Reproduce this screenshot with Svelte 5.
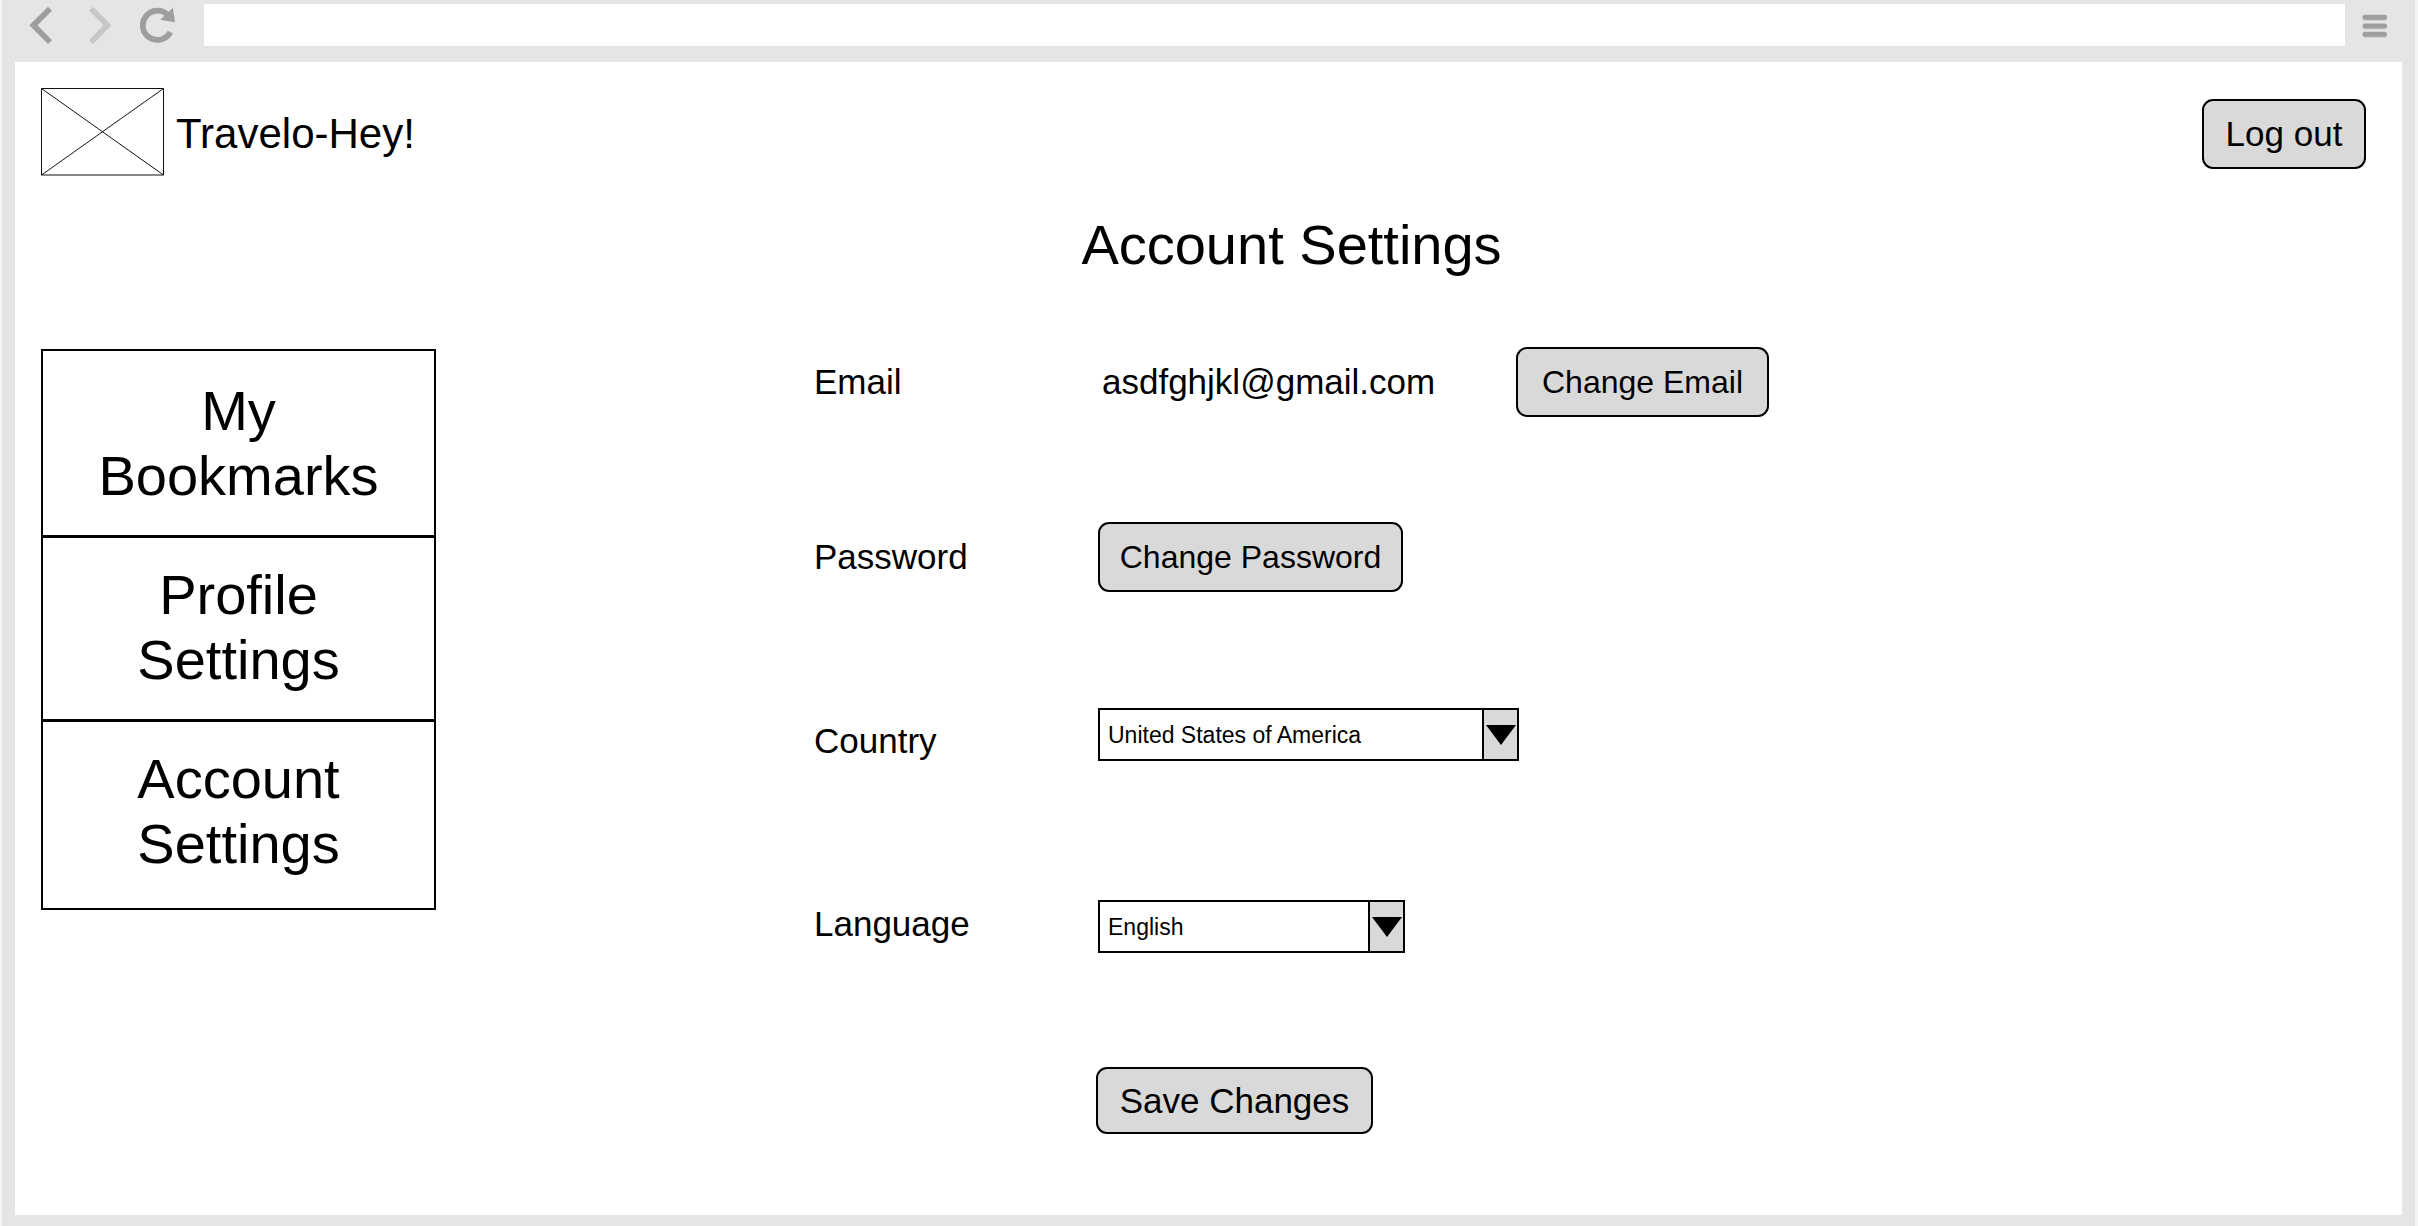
<script>
  let country = $state('United States of America');
  let language = $state('English');
  let address = $state('');

  const countries = ['United States of America', 'Canada', 'Indonesia', 'United Kingdom'];
  const languages = ['English', 'French', 'Indonesian', 'Spanish'];
  const links = [
    ['My', 'Bookmarks'],
    ['Profile', 'Settings'],
    ['Account', 'Settings']
  ];
</script>

{#snippet dropArrow()}
  <span class="arrow" aria-hidden="true">
    <svg width="30" height="20" viewBox="0 0 30 20"><path d="M0 0H30L15 20Z" /></svg>
  </span>
{/snippet}

<div class="browser">
  <div class="toolbar">
    <div class="history">
      <button type="button" class="icon" aria-label="Back">
        <svg width="24" height="38" viewBox="0 0 24 38" fill="#9e9e9e">
          <path d="M0.3 19.3L19 0.8L23 4.8L8.5 19.3L23 34.3L19 38Z" />
        </svg>
      </button>
      <button type="button" class="icon" aria-label="Forward">
        <svg width="24" height="38" viewBox="0 0 24 38" fill="#c6c6c6">
          <path d="M23.5 19.3L5 0.8L1 4.8L15.5 19.3L1 34.3L5 38Z" />
        </svg>
      </button>
    </div>
    <button type="button" class="icon" aria-label="Reload">
      <svg width="36" height="38" viewBox="0 0 36 38">
        <path d="M30.3 26.1A14.6 14.6 0 1 1 27.5 8.8" fill="none" stroke="#9e9e9e" stroke-width="5.8" />
        <path d="M32.8 1.8L35 16.2L20.3 13.8Z" fill="#9e9e9e" />
      </svg>
    </button>
    <input class="address" type="text" aria-label="Address" bind:value={address} />
    <button type="button" class="icon menu" aria-label="Menu">
      <svg width="25" height="26" viewBox="0 -2 25 26">
        <g fill="#cfcfcf">
          <rect x="0.5" y="1.5" width="24.5" height="5.5" rx="2.7" />
          <rect x="0.5" y="10" width="24.5" height="5.5" rx="2.7" />
          <rect x="0.5" y="18.5" width="24.5" height="5.5" rx="2.7" />
        </g>
        <g fill="#9e9e9e">
          <rect x="0.5" y="0.7" width="24.5" height="5" rx="2.5" />
          <rect x="0.5" y="9.4" width="24.5" height="5" rx="2.5" />
          <rect x="0.5" y="17.8" width="24.5" height="5" rx="2.5" />
        </g>
      </svg>
    </button>
  </div>

  <div class="page">
    <header>
      <svg class="logo" width="123" height="88" viewBox="0 0 123 88" aria-hidden="true">
        <path d="M0.5 0.5H122.5V87H0.5ZL122.5 87M122.5 0.5L0.5 87" fill="none" stroke="#111" />
      </svg>
      <span class="brand">Travelo-Hey!</span>
      <button type="button" class="button logout">Log out</button>
    </header>

    <main>
      <nav aria-label="Account">
        {#each links as [first, second]}
          <a href="#{first.toLowerCase()}">{first}<br />{second}</a>
        {/each}
      </nav>

      <form onsubmit={(event) => event.preventDefault()}>
        <h1>Account Settings</h1>

        <div class="row email">
          <span class="label">Email</span>
          <span class="address-text">asdfghjkl@gmail.com</span>
          <button type="button" class="button small change-email">Change Email</button>
        </div>

        <div class="row password">
          <span class="label">Password</span>
          <button type="button" class="button small change-password">Change Password</button>
        </div>

        <div class="row country">
          <label class="label" for="country">Country</label>
          <div class="select wide">
            <select id="country" bind:value={country}>
              {#each countries as name}<option>{name}</option>{/each}
            </select>
            {@render dropArrow()}
          </div>
        </div>

        <div class="row language">
          <label class="label" for="language">Language</label>
          <div class="select">
            <select id="language" bind:value={language}>
              {#each languages as name}<option>{name}</option>{/each}
            </select>
            {@render dropArrow()}
          </div>
        </div>

        <div class="row save">
          <button type="submit" class="button submit">Save Changes</button>
        </div>
      </form>
    </main>
  </div>
</div>

<style>
  :global(body) {
    margin: 0;
    background: #e5e5e5;
  }

  .browser,
  .browser * {
    box-sizing: border-box;
  }

  .browser {
    display: flex;
    flex-direction: column;
    min-height: 100vh;
    padding: 0 13px 11px;
    border: solid #f4f4f4;
    border-width: 0 3px 0 2px;
    background: #e5e5e5;
    color: #000;
    font-family: "Liberation Sans", Arial, sans-serif;
    font-size: 35px;
    line-height: 40px;
  }

  .toolbar {
    display: flex;
    align-items: center;
    gap: 28px;
    padding: 4px 15px 16px 14px;
  }

  .history {
    display: flex;
    gap: 35px;
  }

  .icon {
    display: flex;
    padding: 0;
    border: 0;
    background: none;
  }

  .address {
    flex: 1;
    min-width: 0;
    height: 42px;
    padding: 0 12px;
    border: 0;
    background: #fff;
    font: inherit;
    font-size: 23px;
  }

  .menu {
    margin-left: -11px;
  }

  .page {
    flex: 1;
    padding: 26px 36px 26px 26px;
    background: #fff;
  }

  header {
    display: flex;
    align-items: center;
    min-height: 91px;
  }

  .logo {
    align-self: flex-start;
  }

  .brand {
    margin-left: 12px;
    font-size: 42px;
    line-height: 48px;
  }

  .button {
    height: 70px;
    padding: 0;
    border: 2px solid #000;
    border-radius: 11px;
    background: #d9d9d9;
    color: #000;
    font: inherit;
  }

  .small {
    font-size: 32px;
  }

  .logout {
    width: 164px;
    margin-left: auto;
  }

  main {
    display: flex;
    align-items: flex-start;
    gap: 378px;
    padding-top: 33px;
  }

  nav {
    display: flex;
    flex-direction: column;
    flex: 0 0 395px;
    margin-top: 137px;
    padding: 3px 0 5px;
    border: 2px solid #000;
  }

  nav a {
    padding: 24px 0 27px;
    color: inherit;
    font-size: 56px;
    line-height: 65px;
    text-align: center;
    text-decoration: none;
  }

  nav a:not(:last-child) {
    border-bottom: 3px solid #000;
  }

  form {
    flex: 0 1 955px;
  }

  h1 {
    margin: 0;
    font-size: 56px;
    font-weight: 400;
    line-height: 65px;
    text-align: center;
  }

  .row {
    display: flex;
    align-items: center;
  }

  .label {
    flex: 0 0 284px;
  }

  .email {
    margin-top: 70px;
  }

  .address-text {
    padding-left: 4px;
  }

  .change-email {
    width: 253px;
    margin-left: auto;
  }

  .password {
    margin-top: 105px;
  }

  .change-password {
    width: 305px;
  }

  .country {
    align-items: flex-end;
    margin-top: 116px;
  }

  .language {
    align-items: flex-start;
    margin-top: 139px;
    line-height: 48px;
  }

  .save {
    margin-top: 114px;
    padding-left: 282px;
  }

  .submit {
    width: 277px;
    height: 67px;
  }

  .select {
    display: grid;
    width: 307px;
    height: 53px;
  }

  .wide {
    width: 421px;
  }

  select,
  .arrow {
    grid-area: 1 / 1;
    border: 2px solid #000;
  }

  select {
    width: 100%;
    height: 100%;
    padding: 0 44px 0 8px;
    border-radius: 0;
    appearance: none;
    background: #fff;
    color: #000;
    font: inherit;
    font-size: 23px;
  }

  .arrow {
    display: flex;
    align-items: center;
    justify-content: center;
    justify-self: end;
    width: 37px;
    background: #d9d9d9;
    pointer-events: none;
  }
</style>
